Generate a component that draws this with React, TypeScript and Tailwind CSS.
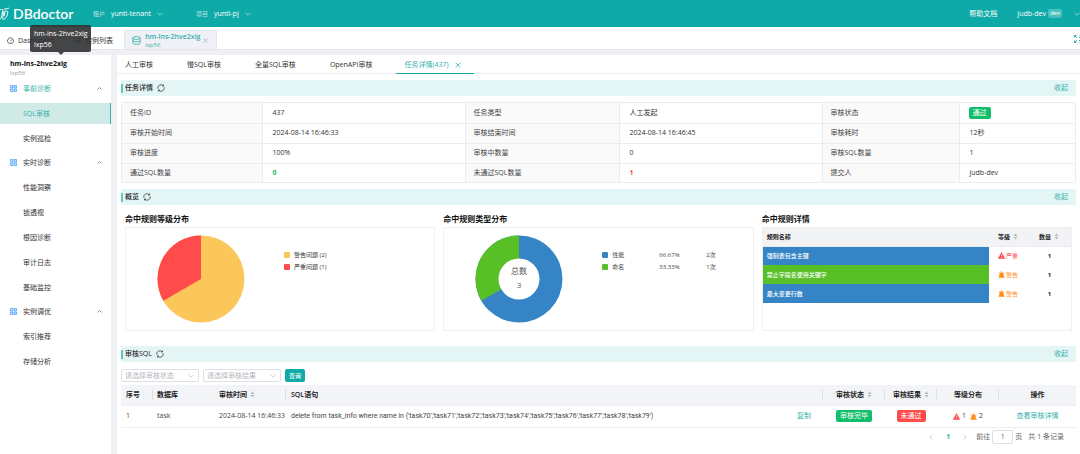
import type { ReactNode } from "react";

type MenuGroup = { title: string; active?: boolean; items: string[] };

const menu: MenuGroup[] = [
  { title: "事前诊断", active: true, items: ["SQL审核", "实例巡检"] },
  { title: "实时诊断", items: ["性能洞察", "锁透视", "根因诊断", "审计日志", "基础监控"] },
  { title: "实例调优", items: ["索引推荐", "存储分析"] },
];

const pageTabs = ["人工审核", "慢SQL审核", "全量SQL审核", "OpenAPI审核"];

const details: [string, ReactNode][][] = [
  [["任务ID", "437"], ["任务类型", "人工发起"], ["审核状态", <Tag key="t" className="-ml-px bg-[#13be6b]">通过</Tag>]],
  [["审核开始时间", "2024-08-14 16:46:33"], ["审核结束时间", "2024-08-14 16:46:45"], ["审核耗时", "12秒"]],
  [["审核进度", "100%"], ["审核中数量", "0"], ["审核SQL数量", "1"]],
  [
    ["通过SQL数量", <b key="p" className="text-[#13be6b]">0</b>],
    ["未通过SQL数量", <b key="f" className="text-[#ff4d4f]">1</b>],
    ["提交人", "judb-dev"],
  ],
];

const rules = [
  { name: "强制表包含主键", color: "bg-[#3585c6]", severe: true, count: 1 },
  { name: "禁止字段名使用关键字", color: "bg-[#58bf27]", severe: false, count: 1 },
  { name: "最大变更行数", color: "bg-[#3585c6]", severe: false, count: 1 },
];

const sqlText =
  "delete from task_info where name in ('task70','task71','task72','task73','task74','task75','task76','task77','task78','task79')";

function Tag({ className, children }: { className: string; children: ReactNode }) {
  return (
    <span className={`inline-block h-3 rounded-[2px] px-1 text-[7px] leading-3 text-white ${className}`}>{children}</span>
  );
}

function Chevron({ up, className = "size-[6px]" }: { up?: boolean; className?: string }) {
  return (
    <svg viewBox="0 0 10 10" className={`shrink-0 ${className}`} fill="none" stroke="currentColor" strokeWidth="1.2">
      <path d={up ? "M1 7l4-4 4 4" : "M1 3l4 4 4-4"} />
    </svg>
  );
}

function Close({ className = "size-[6px]" }: { className?: string }) {
  return (
    <svg viewBox="0 0 10 10" className={`shrink-0 ${className}`} fill="none" stroke="currentColor" strokeWidth="1.3">
      <path d="M1 1l8 8M9 1L1 9" />
    </svg>
  );
}

function Sort() {
  return (
    <svg viewBox="0 0 10 14" className="inline-block h-[7px] w-[5px] shrink-0 fill-[#b4b8c0]">
      <path d="M5 1l4 5H1zM5 13L1 8h8z" />
    </svg>
  );
}

function GridIcon() {
  return (
    <svg viewBox="0 0 14 14" className="size-[7px] shrink-0" fill="#c9e4ff" stroke="#3f9dfb" strokeWidth="1.4">
      <path d="M1 1h5v5H1zM8 1h5v5H8zM1 8h5v5H1zM8 8h5v5H8z" />
    </svg>
  );
}

function SevereIcon() {
  return (
    <svg viewBox="0 0 14 14" className="size-[7px] shrink-0">
      <path d="M7 1l6.5 12H.5z" fill="#ff4d4f" stroke="#ff4d4f" strokeLinejoin="round" />
      <path d="M7 5v4M7 10.3v1.4" stroke="#fff" strokeWidth="1" />
    </svg>
  );
}

function WarnIcon() {
  return (
    <svg viewBox="0 0 14 14" className="size-[7px] shrink-0">
      <path d="M2.500 12V7.500a4.500 4.500 0 019 0V12zM1 11h12v2.500H1z" fill="#ff8c1a" />
      <path d="M7 0v4M1.500 2.500L4 5M12.500 2.500L10 5" stroke="#ff8c1a" strokeWidth="1.600" />
    </svg>
  );
}

function SectionHeader({ title }: { title: string }) {
  return (
    <div className="flex h-4 items-center bg-[#e3f6f5] pr-2">
      <span className="mr-[2px] h-[9px] w-[2px] bg-[#5cc8c4]" />
      <h2 className="text-[7px] font-medium text-[#222]">{title}</h2>
      <button aria-label="刷新" className="ml-1 text-[#333]">
        <svg viewBox="0 0 16 16" className="size-[8px]" fill="none" stroke="currentColor" strokeWidth="1.5">
          <path d="M1.800 9.500a6.200 6.200 0 0110.500-6M14.200 6.500a6.200 6.200 0 01-10.500 6" />
          <path d="M13 1v3h-3M3 15v-3h3" />
        </svg>
      </button>
      <button className="ml-auto text-[7px] text-[#35b1ac]">收起</button>
    </div>
  );
}

function Logo() {
  return (
    <div className="flex w-[93px] items-center text-white">
      <svg viewBox="0 0 18 28" className="h-[14px] w-[9px]" fill="none" stroke="currentColor" strokeWidth="2" strokeLinecap="round" strokeLinejoin="round">
        <path d="M0 5h3c2 0 3 1 2.500 3L3 20c-.5 2-1 4-3 4" />
        <path d="M8 9L5.500 21c-.5 3 0 4 2 3.500C12 23 15 17 15.500 12c.3-3-1-4.500-3-4.500-1.500 0-2 1-2.500 2.500L8.500 17" />
        <path d="M8 4.500c3-1.500 6-1 9-2" />
      </svg>
      <span className="ml-1 font-['Lato',sans-serif] text-[14px] leading-[18px] font-semibold">DBdoctor</span>
    </div>
  );
}

function TopBar() {
  return (
    <header className="flex h-[27px] shrink-0 items-center bg-[#0eaaa7] text-[7px] text-white">
      <Logo />
      <span className="w-[18px] text-[6px] text-white/70">租户</span>
      <button className="flex w-[85px] items-center gap-[6px]">yunti-tenant<Chevron className="size-[6px] text-white/70" /></button>
      <span className="w-[18px] text-[6px] text-white/70">项目</span>
      <button className="flex items-center gap-[6px]">yunti-pj<Chevron className="size-[6px] text-white/70" /></button>
      <a href="#help" className="mr-5 ml-auto">帮助文档</a>
      <button className="flex items-center">
        judb-dev
        <span className="mr-3 ml-[2px] rounded-[2px] bg-white/25 px-[2px] text-[6px] leading-[9px]">dev</span>
        <Chevron className="size-[6px] text-white/70" />
      </button>
    </header>
  );
}

function WindowTabs() {
  return (
    <nav className="flex h-[23px] shrink-0 items-end border-b border-[#e4e6ea] bg-white text-[7px] text-[#333]">
      <button className="flex h-[19px] items-center gap-1 pt-[2px] pl-[7px]">
        <svg viewBox="0 0 14 14" className="size-[7px]" fill="none" stroke="currentColor" strokeWidth="1.4">
          <path d="M3.500 12.500a6 6 0 117 0zM7 8.500l2-3.500" />
        </svg>
        Dashboard
      </button>
      <button className="ml-5 flex h-[19px] items-center gap-1 pt-[2px] pr-[9px]">
        <svg viewBox="0 0 14 14" className="size-[7px]" fill="none" stroke="currentColor" strokeWidth="1.6">
          <path d="M1 3h2M5 3h9M1 7h2M5 7h9M1 11h2M5 11h9" />
        </svg>
        实例列表
      </button>
      <button className="ml-[2px] flex h-[19px] w-[93px] items-center rounded-t-[2px] border border-b-0 border-[#e4e6ee] bg-[#eff1f6] pl-[7px] text-left text-[#35b1ac]">
        <svg viewBox="0 0 16 16" className="size-[9px] shrink-0" fill="none" stroke="currentColor" strokeWidth="1.5">
          <ellipse cx="8" cy="3.500" rx="6.500" ry="2.500" />
          <path d="M1.500 3.500v9c0 1.500 3 2.500 6.500 2.500s6.500-1 6.500-2.500v-9M1.500 8c0 1.500 3 2.500 6.500 2.500s6.500-1 6.500-2.500" />
        </svg>
        <span className="ml-1 pt-px leading-[8px]">
          <span className="block font-semibold">hm-ins-2hve2xig</span>
          <span className="block text-[6px]">lxp56</span>
        </span>
        <Close className="ml-[3px] size-[5px] text-[#999]" />
      </button>
      <button aria-label="全屏" className="mb-[6px] ml-auto w-[6px] overflow-hidden text-[#35b1ac]">
        <svg viewBox="0 0 16 16" className="h-[8px] w-[8px] max-w-none" fill="none" stroke="currentColor" strokeWidth="2">
          <path d="M1 5V1h4M1 1l5 5M11 1h4v4M15 1l-5 5M1 11v4h4M1 15l5-5M15 11v4h-4M15 15l-5-5" />
        </svg>
      </button>
    </nav>
  );
}

function Sidebar() {
  return (
    <aside className="w-[111px] shrink-0 bg-white text-[7px] text-[#333]">
      <div className="pt-1 pl-[10px]">
        <div className="text-[7px] leading-[10px] font-bold text-[#111]">hm-ins-2hve2xig</div>
        <div className="text-[6px] leading-[8px] text-[#999]">lxp56</div>
      </div>
      <div className="mt-px flex flex-col gap-[3px]">
        {menu.map(group => (
          <div key={group.title} className="flex flex-col gap-1">
            <button className={`flex h-[21px] items-center pr-[9px] pl-[10px] ${group.active ? "text-[#35b1ac]" : ""}`}>
              <GridIcon />
              <span className="ml-[6px]">{group.title}</span>
              <Chevron up className="ml-auto size-[5px] text-[#555]" />
            </button>
            {group.items.map(item => (
              <a
                key={item}
                href="#menu"
                className={`flex h-[21px] items-center pl-[23px] ${
                  item === "SQL审核" ? "border-r border-[#35b1ac] bg-[#d0eae5] text-[#35b1ac]" : ""
                }`}
              >
                {item}
              </a>
            ))}
          </div>
        ))}
      </div>
    </aside>
  );
}

function PageTabs() {
  return (
    <div className="flex h-[19px] items-stretch border-b border-[#eceef1] pl-[8px] text-[7px] text-[#333]">
      {pageTabs.map((tab, i) => (
        <button key={tab} className={i === 3 ? "mr-6 pt-px" : "mr-[34px] pt-px"}>
          {tab}
        </button>
      ))}
      <button className="-mb-px flex items-center gap-[6px] border-b border-[#0eaaa7] pt-px pr-[13px] pl-2 text-[#35b1ac]">
        任务详情(437)
        <Close />
      </button>
    </div>
  );
}

function DetailTable() {
  return (
    <div className="mt-[6px] rounded-[2px] border border-[#ececee]">
      <table className="w-full table-fixed border-collapse text-[7px] text-[#444]">
        <colgroup>
          <col className="w-[140px]" />
          <col className="w-[203px]" />
          <col className="w-[154px]" />
          <col className="w-[203px]" />
          <col className="w-[137px]" />
          <col />
        </colgroup>
        <tbody className="divide-y divide-[#ececee]">
          {details.map((row, i) => (
            <tr key={i} className="h-[20px] divide-x divide-[#ececee] last:h-[19px]">
              {row.map(([label, value]) => [
                <th key={label} className="bg-[#fafafa] py-0 pl-2 text-left font-normal">{label}</th>,
                <td key={`${label}-value`} className="py-0 pl-[10px] text-[#333]">{value}</td>,
              ])}
            </tr>
          ))}
        </tbody>
      </table>
    </div>
  );
}

function Card({ title, children }: { title: string; children: ReactNode }) {
  return (
    <section className="min-w-0 flex-1">
      <h3 className="pb-[2px] text-[8px] leading-[12px] font-bold text-[#111]">{title}</h3>
      <div className="h-[104px] border border-[#f0f0f2]">{children}</div>
    </section>
  );
}

function LevelChart() {
  return (
    <div className="flex pt-[7px] pl-[31px]">
      <svg viewBox="0 0 88 88" className="size-[88px] shrink-0">
        <circle cx="44" cy="44" r="43.500" fill="#fbc65a" />
        <path d="M44 44L6.330 65.750A43.500 43.500 0 0 1 44 .5z" fill="#ff4b4b" />
      </svg>
      <ul className="mt-[14px] ml-[39px] text-[6px] leading-[12px] text-[#333]">
        <li className="flex items-center gap-1"><i className="size-[6px] rounded-[1px] bg-[#fbc65a]" />警告问题 (2)</li>
        <li className="flex items-center gap-1"><i className="size-[6px] rounded-[1px] bg-[#ff4b4b]" />严重问题 (1)</li>
      </ul>
    </div>
  );
}

function TypeChart() {
  const rows = [
    { name: "性能", share: "66.67%", count: "2次", color: "bg-[#3585c6]" },
    { name: "命名", share: "33.33%", count: "1次", color: "bg-[#58bf27]" },
  ];
  return (
    <div className="flex pt-[7px] pl-[31px]">
      <svg viewBox="0 0 88 88" className="size-[88px] shrink-0">
        <circle cx="44" cy="44" r="43.500" fill="#3585c6" />
        <path d="M44 44L6.330 65.750A43.500 43.500 0 0 1 44 .5z" fill="#58bf27" />
        <circle cx="44" cy="44" r="20.500" fill="#fff" />
        <text x="44" y="39" fontSize="8" textAnchor="middle" fill="#555">总数</text>
        <text x="44" y="53" fontSize="8" textAnchor="middle" fill="#555">3</text>
      </svg>
      <ul className="mt-[14px] ml-[39px] text-[6px] leading-[12px] text-[#444]">
        {rows.map(row => (
          <li key={row.name} className="flex items-center">
            <i className={`mr-1 size-[6px] rounded-[1px] ${row.color}`} />
            <span className="w-[47px]">{row.name}</span>
            <span className="w-[47px]">{row.share}</span>
            <span>{row.count}</span>
          </li>
        ))}
      </ul>
    </div>
  );
}

function RuleTable() {
  return (
    <table className="w-full table-fixed border-collapse text-left text-[6px] text-[#222]">
      <thead>
        <tr className="h-[18px] border-b border-[#e8eaee] bg-[#f2f3f5]">
          <th className="py-0 pl-1">规则名称</th>
          <th className="w-[42px] py-0 pl-[9px]"><span className="flex items-center gap-[3px]">等级<Sort /></span></th>
          <th className="w-[40px] py-0 pl-2"><span className="flex items-center gap-[3px]">数量<Sort /></span></th>
        </tr>
      </thead>
      <tbody>
        {rules.map(rule => (
          <tr key={rule.name} className="h-[19px]">
            <td className={`py-0 pl-1 font-medium text-white ${rule.color}`}>{rule.name}</td>
            <td className="py-0 pl-[9px]">
              <span className={`flex items-center gap-px ${rule.severe ? "text-[#ff4d4f]" : "text-[#ff8c1a]"}`}>
                {rule.severe ? <SevereIcon /> : <WarnIcon />}
                {rule.severe ? "严重" : "警告"}
              </span>
            </td>
            <td className="py-0 pr-[3px] text-center font-bold">{rule.count}</td>
          </tr>
        ))}
      </tbody>
    </table>
  );
}

function FilterSelect({ label }: { label: string }) {
  return (
    <div className="relative">
      <select
        aria-label={label}
        className="block h-[13px] w-[78px] appearance-none rounded-[2px] border border-[#dcdfe3] bg-white pl-[3px] text-[7px] leading-[11px] text-[#b4b7bd]"
      >
        <option>{label}</option>
      </select>
      <Chevron className="pointer-events-none absolute top-[4px] right-[5px] size-[6px] text-[#b4b7bd]" />
    </div>
  );
}

function SqlTable() {
  const split = "bg-[linear-gradient(#dfe1e6,#dfe1e6)] bg-[length:1px_11px] bg-right bg-no-repeat";
  return (
    <table className="mt-[3px] w-full table-fixed border-collapse text-[7px] text-[#444]">
      <thead>
        <tr className="h-[20px] border-b border-[#eceef1] bg-[#f3f4f7] text-left text-[#222]">
          <th className={`w-[32px] py-0 pl-[5px] font-semibold ${split}`}>序号</th>
          <th className="w-[62px] py-0 pl-1 font-semibold">数据库</th>
          <th className={`w-[71px] py-0 pl-1 font-semibold ${split}`}><span className="flex items-center gap-[3px]">审核时间<Sort /></span></th>
          <th className={`py-0 pl-[5px] font-semibold ${split}`}>SQL语句</th>
          <th className={`w-[62px] p-0 font-semibold ${split}`}><span className="flex items-center justify-center gap-[3px]">审核状态<Sort /></span></th>
          <th className={`w-[52px] p-0 font-semibold ${split}`}><span className="flex items-center justify-center gap-[3px]">审核结果<Sort /></span></th>
          <th className={`w-[62px] p-0 text-center font-semibold ${split}`}>等级分布</th>
          <th className="w-[77px] p-0 text-center font-semibold">操作</th>
        </tr>
      </thead>
      <tbody>
        <tr className="h-[22px] border-b border-[#eceef1]">
          <td className="py-0 pl-[5px]">1</td>
          <td className="py-0 pl-1">task</td>
          <td className="py-0 pl-1 whitespace-nowrap">2024-08-14 16:46:33</td>
          <td className="py-0 pr-3 pl-[5px]">
            <div className="flex justify-between">
              <span className="truncate font-['Roboto',sans-serif]">{sqlText}</span>
              <button className="shrink-0 text-[#35b1ac]">复制</button>
            </div>
          </td>
          <td className="p-0 text-center"><Tag className="bg-[#13be6b]">审核完毕</Tag></td>
          <td className="p-0 text-center"><Tag className="bg-[#ff4b4b]">未通过</Tag></td>
          <td className="p-0">
            <span className="flex items-center justify-center gap-[2px]">
              <SevereIcon />
              <span className="mr-[2px]">1</span>
              <WarnIcon />
              <span>2</span>
            </span>
          </td>
          <td className="p-0 text-center"><a href="#detail" className="text-[#35b1ac]">查看审核详情</a></td>
        </tr>
      </tbody>
    </table>
  );
}

function Pagination() {
  return (
    <div className="mt-[2px] flex items-center justify-end pr-3 text-[7px] text-[#666]">
      <button aria-label="上一页"><Chevron className="size-[6px] rotate-90 text-[#bbb]" /></button>
      <button className="mx-3 font-bold text-[#35b1ac]">1</button>
      <button aria-label="下一页"><Chevron className="size-[6px] -rotate-90 text-[#bbb]" /></button>
      <label htmlFor="page" className="ml-2">前往</label>
      <input
        id="page"
        defaultValue="1"
        className="mx-[2px] h-[14px] w-[21px] rounded-[2px] border border-[#dcdfe3] text-center text-[7px]"
      />
      <span>页</span>
      <span className="ml-[6px]">共 1 条记录</span>
    </div>
  );
}

export default function App() {
  return (
    <div className="relative flex min-h-screen flex-col overflow-hidden bg-[#eff0f4] font-['Open_Sans','Noto_Sans_CJK_SC',sans-serif] leading-[10px]">
      <TopBar />
      <WindowTabs />
      <div className="flex flex-1 gap-[6px] pt-[5px]">
        <Sidebar />
        <main className="min-w-0 flex-1 bg-white">
          <PageTabs />
          <div className="pt-[6px] pr-1 pl-1">
            <SectionHeader title="任务详情" />
            <DetailTable />
            <div className="mt-[6px]"><SectionHeader title="概览" /></div>
            <div className="mt-[8px] flex gap-2 px-1">
              <Card title="命中规则等级分布"><LevelChart /></Card>
              <Card title="命中规则类型分布"><TypeChart /></Card>
              <Card title="命中规则详情"><RuleTable /></Card>
            </div>
            <div className="mt-[15px]"><SectionHeader title="审核SQL" /></div>
            <form className="mt-[7px] flex gap-1">
              <FilterSelect label="请选择审核状态" />
              <FilterSelect label="请选择审核结果" />
              <button type="button" className="h-[13px] rounded-[2px] bg-[#0eaaa7] px-1 text-[6px] font-medium text-white">查询</button>
            </form>
            <SqlTable />
            <Pagination />
          </div>
        </main>
      </div>

      {/* instance name tooltip */}
      <div role="tooltip" className="absolute top-[25px] left-[30px] w-[61px] rounded-[2px] bg-[#303133]/90 pt-[3px] pb-[2px] pl-1 text-[7px] leading-[11px] font-medium text-white">
        hm-ins-2hve2xig
        <br />
        lxp56
        <span className="absolute top-full left-[28px] border-x-[3px] border-t-[3px] border-x-transparent border-t-[#303133]/90" />
      </div>
    </div>
  );
}
